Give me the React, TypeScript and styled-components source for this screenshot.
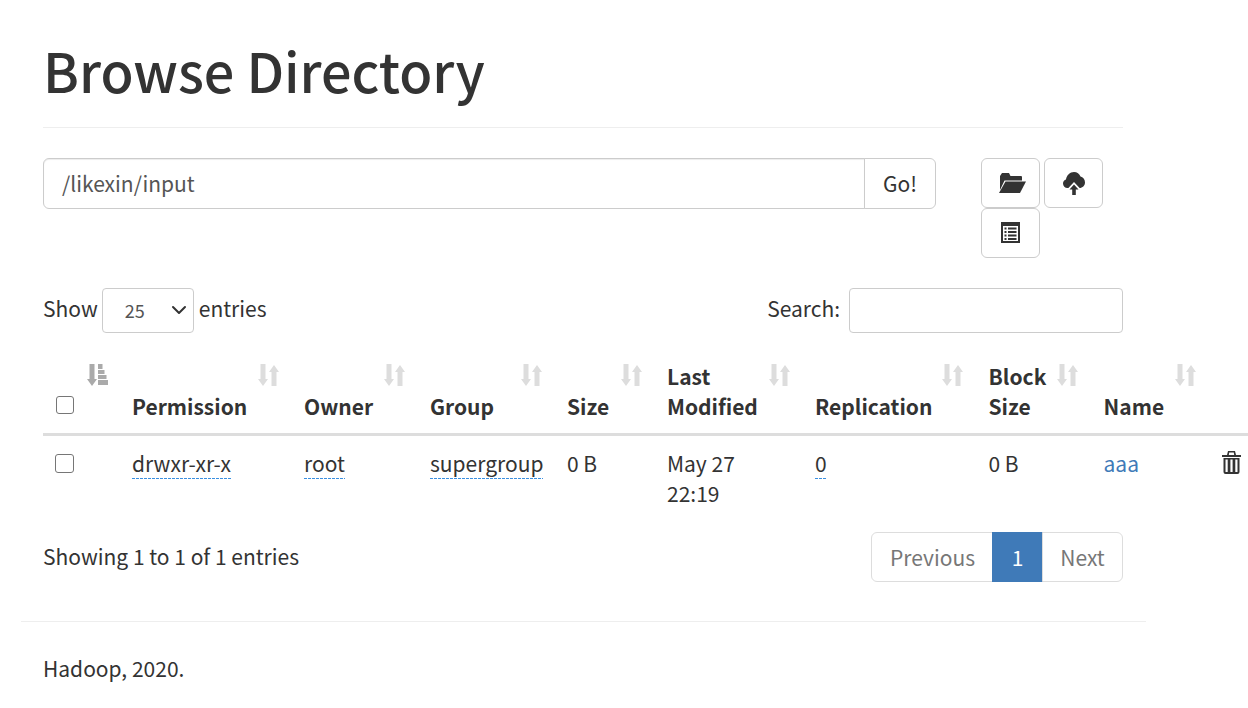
import React from "react";
import styled, { createGlobalStyle } from "styled-components";

const Global = createGlobalStyle`
  html, body { margin: 0; padding: 0; background: #fff; overflow: hidden; }
  body { font-family: "Noto Sans CJK SC", "Noto Sans", sans-serif; font-size: 21px; line-height: 30px; color: #333; }
`;
const Page = styled.div`
  width: 1125px;
  margin-left: 21px;
  height: 708px;
`;
const Inner = styled.div`
  padding: 0 22px;
  width: 1080px;
`;
const Header = styled.div`
  padding-top: 32px;
  height: 95px;
  border-bottom: 1px solid #eee;
  box-sizing: content-box;
`;
const Title = styled.h1`
  margin: 0;
  font-size: 53.9px;
  line-height: 76px;
  font-weight: 500;
  color: #333;
`;
const Toolbar = styled.div`
  display: flex;
  margin-top: 30px;
`;
const PathInput = styled.div`
  box-sizing: border-box;
  width: 822px;
  height: 51px;
  border: 1px solid #ccc;
  border-radius: 6px 0 0 6px;
  padding: 9px 18px;
  color: #555;
  box-shadow: inset 0 1px 1px rgba(0,0,0,.075);
`;
const GoButton = styled.div`
  box-sizing: border-box;
  width: 72px;
  height: 51px;
  margin-left: -1px;
  padding-bottom: 2px;
  border: 1px solid #ccc;
  border-radius: 0 6px 6px 0;
  display: flex; align-items: center; justify-content: center;
`;
const IconGroup = styled.div`
  margin-left: 45px;
  width: 130px;
  display: flex;
  flex-wrap: wrap;
  column-gap: 4px;
  align-content: flex-start;
`;
const IconButton = styled.div<{ $nudge?: string }>`
  box-sizing: border-box;
  width: 59px;
  height: 50px;
  border: 1px solid #ccc;
  border-radius: 6px;
  display: flex; align-items: center; justify-content: center;
  color: #333;
  padding: ${(p) => p.$nudge || "0"};
`;
const Controls = styled.div`
  display: flex;
  justify-content: space-between;
  align-items: center;
  margin-top: 30px;
  height: 45px;
`;
const Inline = styled.div`
  display: flex;
  align-items: center;
  gap: 4px;
`;
const ControlLabel = styled.span`
  padding-bottom: 5px;
`;
const EntriesLabel = styled(ControlLabel)`
  margin-left: 1px;
`;
const FakeSelect = styled.div`
  box-sizing: border-box;
  width: 92px;
  height: 45px;
  border: 1px solid #ccc;
  border-radius: 4px;
  font-size: 18px;
  display: flex;
  align-items: center;
  justify-content: space-between;
  padding: 0 6px 2px 22px;
  color: #555;
`;
const SearchBox = styled.div`
  box-sizing: border-box;
  width: 274px;
  height: 45px;
  border: 1px solid #ccc;
  border-radius: 4px;
  margin-left: 5px;
`;
const Table = styled.table`
  border-collapse: collapse;
  table-layout: fixed;
  width: 1205px;
  margin-top: 17px;
`;
const HeadCell = styled.th<{ $w: number }>`
  position: relative;
  width: ${(p) => p.$w}px;
  box-sizing: border-box;
  padding: 11px 12px 12px;
  text-align: left;
  vertical-align: bottom;
  font-weight: 700;
  border-bottom: 3px solid #ddd;
  color: #333;
`;
const SortMark = styled.span<{ $active?: boolean }>`
  position: absolute;
  right: 12.5px;
  top: 14px;
  width: 22px;
  height: 23px;
  color: ${(p) => (p.$active ? "#aaa" : "#ddd")};
  display: block;
  line-height: 0;
`;
const Cell = styled.td`
  padding: 12px 12px 12px;
  vertical-align: top;
`;
const Dotted = styled.span`
  display: inline-block;
  line-height: 28px;
  padding-bottom: 2px;
  background: repeating-linear-gradient(90deg, #3a8fe0 0 3px, transparent 3px 4px) left bottom / 100% 1px no-repeat;
`;
const LinkText = styled.span`
  color: #3f7ab8;
`;
const TrashWrap = styled.span`
  display: block;
  line-height: 0;
  margin-top: 3px;
`;
const Box = styled.span<{ $head?: boolean }>`
  display: block;
  box-sizing: border-box;
  width: ${(p) => (p.$head ? 18 : 19)}px;
  height: ${(p) => (p.$head ? 18 : 19)}px;
  border: 1.5px solid #767676;
  border-radius: 3px;
  background: #fff;
  margin-top: ${(p) => (p.$head ? 0 : 6)}px;
  margin-bottom: ${(p) => (p.$head ? 7 : 0)}px;
  margin-left: ${(p) => (p.$head ? 1 : 0)}px;
`;
const Footer = styled.div`
  display: flex;
  justify-content: space-between;
  align-items: center;
  margin-top: 12px;
`;
const FooterInfo = styled.span`
  padding-bottom: 2px;
`;
const Pager = styled.div`
  display: flex;
  height: 50px;
`;
const PageItem = styled.div<{ $active?: boolean; $pos?: string; $w: number }>`
  box-sizing: border-box;
  width: ${(p) => p.$w}px;
  padding-left: ${(p) => (p.$pos === "first" ? 1 : 0)}px;
  height: 50px;
  display: flex;
  align-items: center;
  justify-content: center;
  border: 1px solid ${(p) => (p.$active ? "#3f7ab8" : "#ddd")};
  background: ${(p) => (p.$active ? "#3f7ab8" : "#fff")};
  color: ${(p) => (p.$active ? "#fff" : "#777")};
  margin-left: ${(p) => (p.$pos === "first" ? 0 : -1)}px;
  border-radius: ${(p) => (p.$pos === "first" ? "6px 0 0 6px" : p.$pos === "last" ? "0 6px 6px 0" : "0")};
`;
const Rule = styled.div`
  margin-top: 39px;
  border-top: 1px solid #eee;
`;
const Foot = styled.div`
  padding: 31px 22px 0;
`;

const SortIcon = ({ active }: { active?: boolean }) => (
  <SortMark $active={active}>
    <svg width="22" height="23" viewBox="0 0 22 23" fill="currentColor">
      {active ? (
        <path d="M3.500 0h5v15H11l-5 7-5-7h2.500zM12 0h4.500v5H12zM12 6h6.500v4H12zM12 11h8.500v4H12zM12 16h10v5H12z" />
      ) : (
        <path d="M2.500 0h5v15H10l-5 7-5-7h2.500zM16 1l5 7h-2.500v14h-5V8H11z" />
      )}
    </svg>
  </SortMark>
);

const FolderOpen = () => (
  <svg width="27" height="20" viewBox="0 0 27 20" fill="currentColor">
    <path d="M1 3 3 0h7l1.500 3H22q1 0 1 1v3.500H5.500L1 17z" />
    <path d="M6.500 8.500H27L21 20H0z" />
  </svg>
);
const CloudUp = () => (
  <svg width="22" height="23" viewBox="0 0 22 23" fill="currentColor">
    <path d="M4.500 16C2 16 0 14 0 11.500 0 9.500 1.300 8 3 7.500 3.500 3.500 7 0 11 0c3 0 5.500 1.800 6.500 4.500C20 5 22 7.500 22 10.500 22 13.500 19.500 16 16.500 16z" />
    <path d="M11 10l7 7.500h-4V23H8v-5.500H4z" fill="#fff" />
    <path d="M11 12.500l4.500 5h-2.700V23H9.200v-5.500H6.500z" />
  </svg>
);
const ListAlt = () => (
  <svg width="19" height="21" viewBox="0 0 19 21" fill="currentColor" fillRule="evenodd">
    <path d="M0 0h19v21H0zM2 4v15h15V4z" />
    <path d="M3.500 5.500h2v2h-2zM7 5.500h8.500v2H7zM3.500 9h2v2h-2zM7 9h8.500v2H7zM3.500 12.500h2v2h-2zM7 12.500h8.500v2H7zM3.500 16h2v2h-2zM7 16h8.500v2H7z" />
  </svg>
);
const Trash = () => (
  <svg width="19" height="23" viewBox="0 0 19 23" fill="currentColor" fillRule="evenodd">
    <path d="M6 0h7l1 4h5v2H0V4h5zM7.200 1.500 6.800 4h5.400l-.4-2.500z" />
    <path d="M1.500 7h16v14q0 2-2 2h-12q-2 0-2-2zM3.500 8.500V21h2.200V8.500zM8.400 8.500V21h2.200V8.500zM13.300 8.500V21h2.200V8.500z" />
  </svg>
);

const Chevron = () => (
  <svg width="16" height="16" viewBox="0 0 16 16" fill="none" stroke="#333" strokeWidth="2" strokeLinecap="round" strokeLinejoin="round">
    <path d="M2 5l6 6 6-6" />
  </svg>
);

const columns: [string, number, boolean?][] = [
  ["", 77, true],
  ["Permission", 172],
  ["Owner", 126],
  ["Group", 137],
  ["Size", 100],
  ["Last Modified", 148],
  ["Replication", 173.5],
  ["Block Size", 115],
  ["Name", 118],
  ["", 38.5],
];

export default function App() {
  return (
    <Page>
      <Global />
      <Inner>
        <Header>
          <Title>Browse Directory</Title>
        </Header>
        <Toolbar>
          <PathInput>/likexin/input</PathInput>
          <GoButton>Go!</GoButton>
          <IconGroup>
            <IconButton $nudge="0 0 0 3px"><FolderOpen /></IconButton>
            <IconButton><CloudUp /></IconButton>
            <IconButton $nudge="0 0 2px 0"><ListAlt /></IconButton>
          </IconGroup>
        </Toolbar>
        <Controls>
          <Inline>
            <ControlLabel>Show</ControlLabel>
            <FakeSelect>25<Chevron /></FakeSelect>
            <EntriesLabel>entries</EntriesLabel>
          </Inline>
          <Inline>
            <ControlLabel>Search:</ControlLabel>
            <SearchBox />
          </Inline>
        </Controls>
        <Table>
          <thead>
            <tr>
              {columns.map(([label, w, active], i) => (
                <HeadCell key={i} $w={w}>
                  {i === 0 ? <Box $head /> : label}
                  {i < 9 && <SortIcon active={active} />}
                </HeadCell>
              ))}
            </tr>
          </thead>
          <tbody>
            <tr>
              <Cell><Box /></Cell>
              <Cell><Dotted>drwxr-xr-x</Dotted></Cell>
              <Cell><Dotted>root</Dotted></Cell>
              <Cell><Dotted>supergroup</Dotted></Cell>
              <Cell>0 B</Cell>
              <Cell>May 27 22:19</Cell>
              <Cell><Dotted>0</Dotted></Cell>
              <Cell>0 B</Cell>
              <Cell><LinkText>aaa</LinkText></Cell>
              <Cell><TrashWrap><Trash /></TrashWrap></Cell>
            </tr>
          </tbody>
        </Table>
        <Footer>
          <FooterInfo>Showing 1 to 1 of 1 entries</FooterInfo>
          <Pager>
            <PageItem $pos="first" $w={122}>Previous</PageItem>
            <PageItem $active $w={51}>1</PageItem>
            <PageItem $pos="last" $w={81}>Next</PageItem>
          </Pager>
        </Footer>
      </Inner>
      <Rule />
      <Foot>Hadoop, 2020.</Foot>
    </Page>
  );
}
